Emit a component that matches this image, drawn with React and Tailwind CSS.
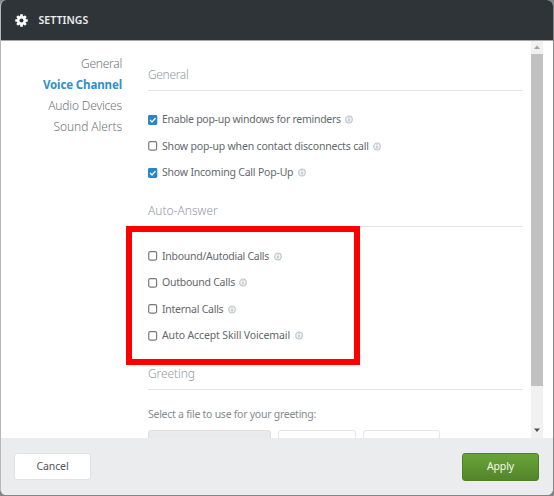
import React from "react";

function InfoIcon() {
  return (
    <svg className="ml-[4.5px] h-[9px] w-[8px] shrink-0" viewBox="0 0 8 9" fill="none">
      <ellipse cx="4" cy="4.5" rx="3.3" ry="3.5" fill="#f0f2f3" stroke="#bfc4c7" strokeWidth="1.1" />
      <path d="M4 4v2.6M4 2.3v1" stroke="#afb4b7" strokeWidth="1.1" />
    </svg>
  );
}

function Check({ checked }) {
  return (
    <svg className="h-[10px] w-[10px] shrink-0" viewBox="0 0 10 10" fill="none">
      {checked ? (
        <>
          <rect x="0" y="0" width="9.3" height="10" rx="1.4" fill="#2389c9" />
          <path d="M2.1 5l1.9 1.9L7.5 3.1" stroke="#fff" strokeWidth="1.4" />
        </>
      ) : (
        <rect x="0.7" y="0.7" width="7.9" height="8.4" rx="1.5" fill="#fff" stroke="#77797b" strokeWidth="1.2" />
      )}
    </svg>
  );
}

function Option({ label, checked, spacing }) {
  return (
    <label className="flex h-[26.5px] items-center text-[10.5px] text-[#63686c]">
      <Check checked={checked} />
      <span className={`ml-[4px] pt-px whitespace-nowrap ${spacing}`}>{label}</span>
      <InfoIcon />
    </label>
  );
}

function Heading({ children, spacing }) {
  return (
    <h2
      className={`flex h-[33px] items-start border-b border-[#e1e3e4] text-[12px] leading-[34px] font-light text-[#929a9f] ${spacing}`}
    >
      {children}
    </h2>
  );
}

export default function App() {
  return (
    <div className="h-[496px] w-[554px] overflow-hidden bg-[#858585] font-['Noto_Sans','Open_Sans',sans-serif]">
      <div className="relative flex h-[495px] w-[553px] flex-col overflow-hidden rounded-[6px] border-l border-[#b5b7b8] bg-white">
        <header className="flex h-[41px] shrink-0 items-center border-b border-[#a5a8aa] bg-[#2e3438] pt-px pl-[14px] text-white">
          <svg className="h-[13px] w-[13px]" viewBox="0 0 24 24" fill="none">
            <path
              d="M12 0.5v23M0.5 12h23M4 4l16 16M20 4L4 20"
              stroke="#fff"
              strokeWidth="5"
              strokeLinecap="butt"
            />
            <circle cx="12" cy="12" r="8.6" fill="#fff" />
            <circle cx="12" cy="12" r="3.7" fill="#2e3438" />
          </svg>
          <h1 className="ml-[10.5px] text-[10.5px] font-semibold tracking-[0.05px] text-[#eceded]">SETTINGS</h1>
        </header>

        <main className="flex h-[397px] shrink-0 overflow-hidden">
          <nav className="flex w-[121px] shrink-0 flex-col pt-[12px] text-right text-[12px] leading-[21px] font-light text-[#70767a]">
            <a className="tracking-[-0.27px]">General</a>
            <a className="text-[11.5px] font-bold tracking-[-0.12px] text-[#318fc8]">Voice Channel</a>
            <a className="tracking-[-0.16px]">Audio Devices</a>
            <a className="tracking-[-0.08px]">Sound Alerts</a>
          </nav>

          <div className="ml-[26px] w-[375px] shrink-0 pt-[17px]">
            <Heading spacing="tracking-[-0.35px]">General</Heading>
            <div className="h-[103px] pt-[15.3px]">
              <Option label="Enable pop-up windows for reminders" checked spacing="tracking-[-0.27px]" />
              <Option label="Show pop-up when contact disconnects call" spacing="tracking-[-0.18px]" />
              <Option label="Show Incoming Call Pop-Up" checked spacing="tracking-[-0.2px]" />
            </div>
            <Heading spacing="tracking-[0px]">Auto-Answer</Heading>
            <div className="h-[129.5px] pt-[15.8px]">
              <Option label="Inbound/Autodial Calls" spacing="tracking-[-0.27px]" />
              <Option label="Outbound Calls" spacing="tracking-[-0.25px]" />
              <Option label="Internal Calls" spacing="tracking-[-0.25px]" />
              <Option label="Auto Accept Skill Voicemail" spacing="tracking-[-0.12px]" />
            </div>
            <Heading spacing="tracking-[-0.1px]">Greeting</Heading>
            <p className="pt-[16px] text-[10.5px] leading-[17px] tracking-[-0.26px] text-[#858b8f]">
              Select a file to use for your greeting:
            </p>
            <div className="mt-[7.5px] flex gap-[7px]">
              <div className="h-[28px] w-[123px] rounded-[3px] border border-[#dddfe1] bg-[#e9eaec]" />
              <div className="h-[28px] w-[77.5px] rounded-[3px] border border-[#e4e6e7] bg-white" />
              <div className="h-[28px] w-[77px] rounded-[3px] border border-[#e4e6e7] bg-white" />
            </div>
          </div>

          <div className="ml-[8px] flex h-full w-[12px] shrink-0 flex-col items-center bg-[#f1f1f1]">
            <svg className="h-[13px] w-[12px]" viewBox="0 0 12 13">
              <path d="M3 8l3-3.5L9 8z" fill="#a3a3a3" />
            </svg>
            <div className="h-[332px] w-full bg-[#c1c1c1]" />
            <svg className="mt-auto h-[13px] w-[12px]" viewBox="0 0 12 13">
              <path d="M3 3.5l3 3.5L9 3.5z" fill="#505050" />
            </svg>
          </div>
        </main>

        <footer className="flex flex-1 items-center justify-between bg-[#ebecee] pr-[14px] pl-[13px] text-[10.5px]">
          <button className="h-[27px] w-[77px] rounded-[3px] border border-[#dfe1e3] bg-white tracking-[-0.1px] text-[#505559]">
            Cancel
          </button>
          <button className="h-[28px] w-[77px] rounded-[3px] border border-[#4c8029] bg-linear-to-b from-[#69a438] to-[#53852b] tracking-[-0.1px] text-[#f4f8f0]">
            Apply
          </button>
        </footer>

        <div className="absolute top-[226px] left-[125px] h-[139px] w-[234px] border-[6px] border-[#ff0000]" />
      </div>
    </div>
  );
}
